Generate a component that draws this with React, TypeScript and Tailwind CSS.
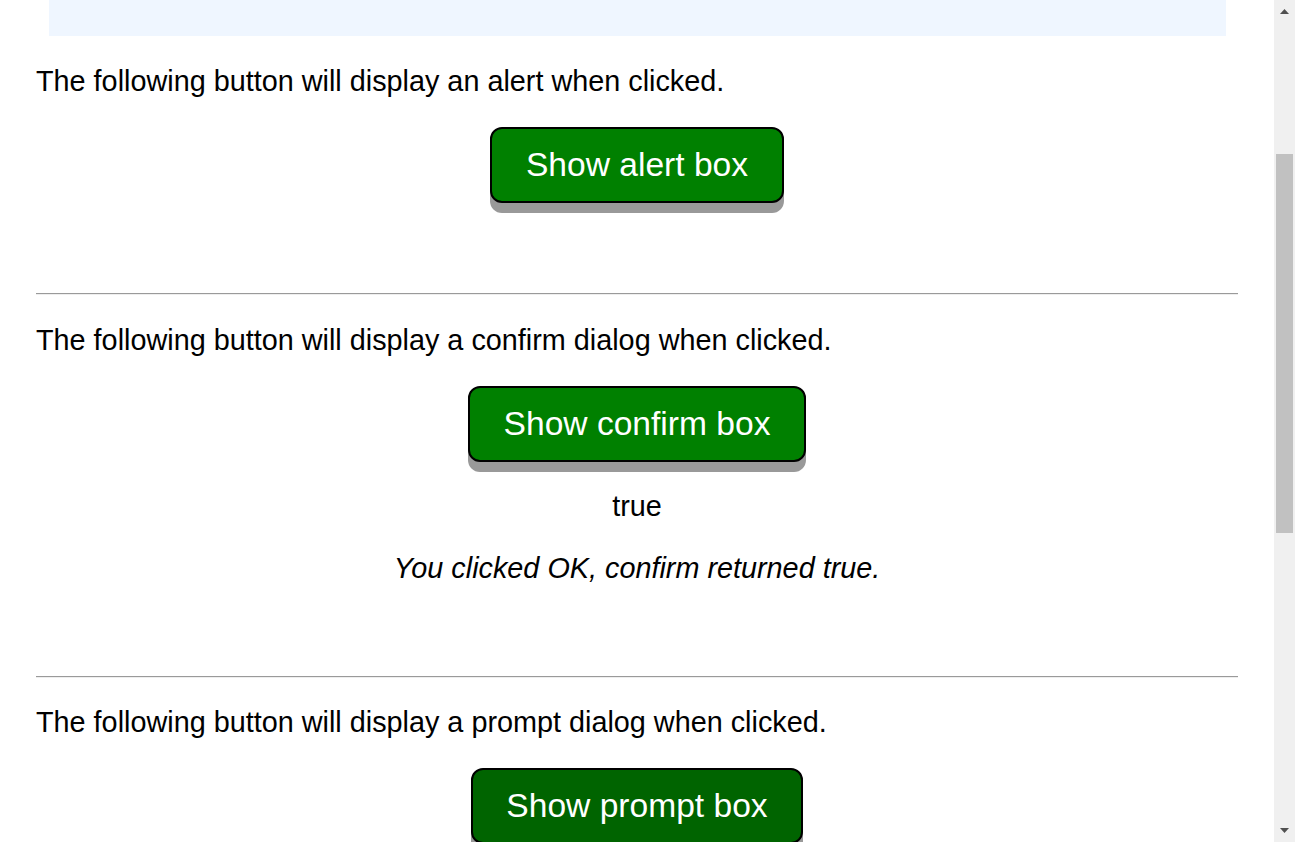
import React from "react";

function Btn({ label, dark }: { label: string; dark?: boolean }) {
  return (
    <div className="flex justify-center">
      <button
        className={
          "h-[76px] rounded-[12px] border-2 border-black text-white text-[33.6px] leading-none shadow-[0_10px_0_#999999] " +
          (dark ? "bg-[#006400] px-[33px]" : "bg-[#008000] px-[34px]")
        }
        style={{ fontFamily: '"Liberation Sans", Arial, sans-serif' }}
      >
        {label}
      </button>
    </div>
  );
}

function Hr({ mt }: { mt: string }) {
  return <div className={"mx-[36px] h-0 border-t border-t-[#9a9a9a] border-b border-b-[#eeeeee] " + mt} />;
}

export default function App() {
  return (
    <div
      className="flex h-[842px] w-[1295px] overflow-hidden bg-white text-black"
      style={{ fontFamily: '"Liberation Sans", Arial, sans-serif' }}
    >
      <div className="flex w-[1274px] flex-col">
        <div className="ml-[49px] mr-[48px] h-[36px] shrink-0 bg-[#eff6ff]" />
        <p className="mt-[29px] px-[36px] text-[28.8px] leading-[33px]">
          The following button will display an alert when clicked.
        </p>
        <div className="mt-[29px]">
          <Btn label="Show alert box" />
        </div>
        <Hr mt="mt-[90px]" />
        <p className="mt-[29px] px-[36px] text-[28.8px] leading-[33px]">
          The following button will display a confirm dialog when clicked.
        </p>
        <div className="mt-[29px]">
          <Btn label="Show confirm box" />
        </div>
        <p className="mt-[28px] text-center text-[28.8px] leading-[33px]">true</p>
        <p className="mt-[29px] text-center text-[28.8px] italic leading-[33px]">
          You clicked OK, confirm returned true.
        </p>
        <Hr mt="mt-[91px]" />
        <p className="mt-[28px] px-[36px] text-[28.8px] leading-[33px]">
          The following button will display a prompt dialog when clicked.
        </p>
        <div className="mt-[29px]">
          <Btn label="Show prompt box" dark />
        </div>
      </div>
      <div className="flex w-[21px] shrink-0 flex-col items-center bg-[#f0f0f0]">
        <svg width="9" height="5" viewBox="0 0 9 5" className="mt-[9px]">
          <polygon points="4.5,0 9,5 0,5" fill="#505050" />
        </svg>
        <div className="mt-[140px] h-[379px] w-[17px] bg-[#c1c1c1]" />
        <div className="flex-1" />
        <svg width="9" height="5" viewBox="0 0 9 5" className="mb-[9px]">
          <polygon points="0,0 9,0 4.5,5" fill="#505050" />
        </svg>
      </div>
    </div>
  );
}
